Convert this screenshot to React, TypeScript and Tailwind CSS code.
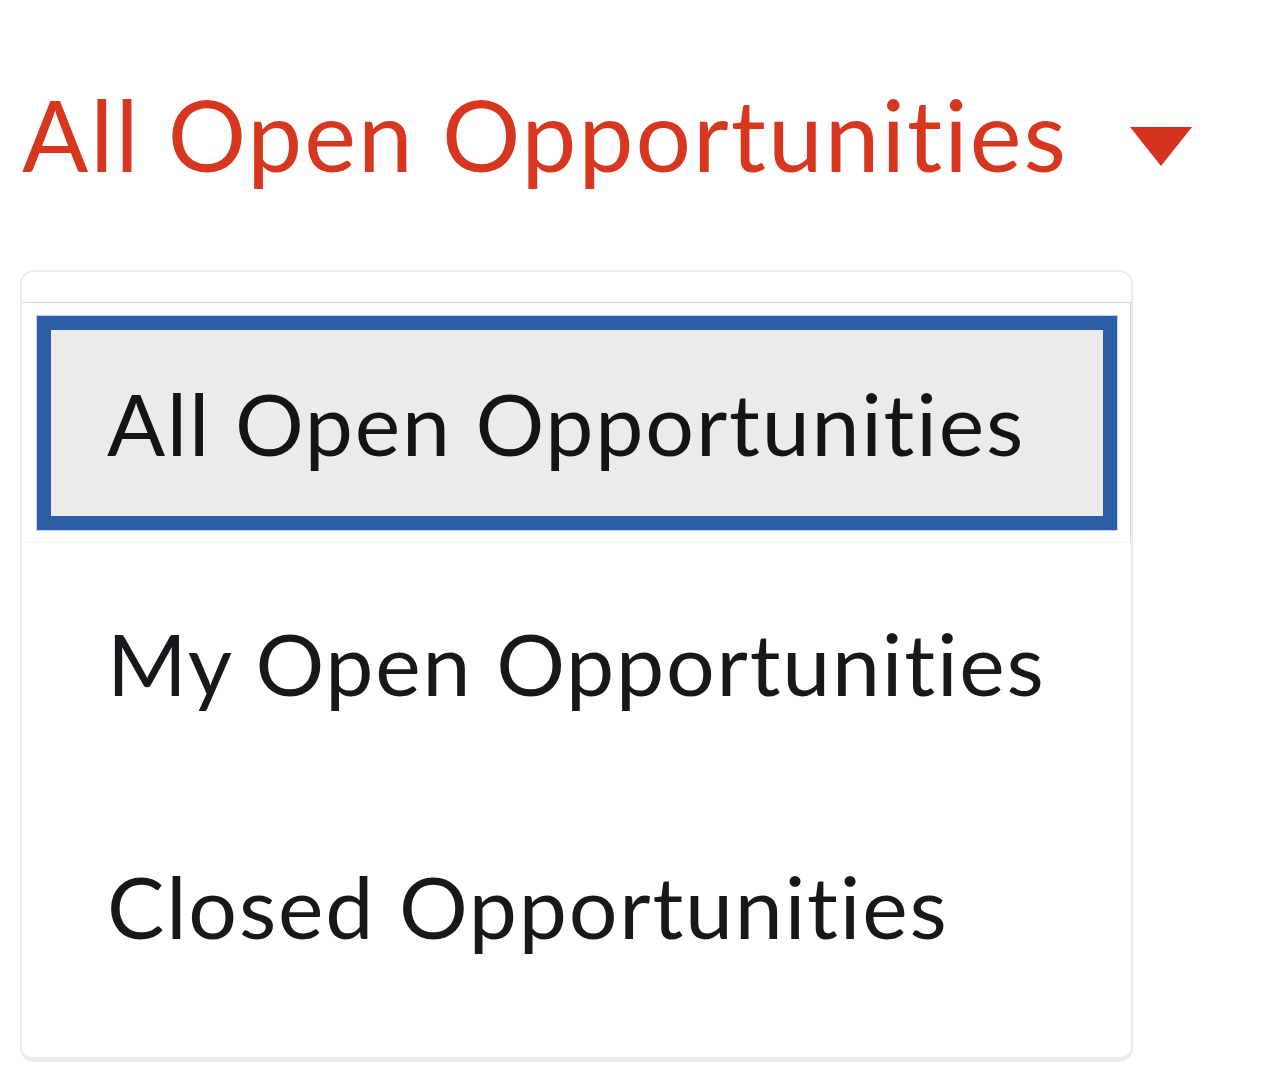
import React from 'react';

const OPTIONS = ['All Open Opportunities', 'My Open Opportunities', 'Closed Opportunities'];

const Caret: React.FC = () => (
  <svg width="62" height="39" viewBox="0 0 62 39" className="mt-[42px] shrink-0">
    <path d="M0 0 H62 L31 39 Z" fill="#d5321f" />
  </svg>
);

export default function App() {
  const [selected] = React.useState(0);

  return (
    <div
      className="min-h-screen bg-white [font-variant-ligatures:none]"
      style={{ fontFamily: 'Lato, "Open Sans", sans-serif' }}
    >
      <div className="flex items-start pt-[85px] pl-[22px]">
        <span className="text-[98px] leading-none tracking-[0.021em] text-[#d7371f] whitespace-nowrap">
          All Open Opportunities
        </span>
        <div className="ml-[62px]">
          <Caret />
        </div>
      </div>

      <div className="ml-[20px] mt-[87px] w-[1113px] h-[792px] rounded-[14px] border-2 border-b-[5px] border-[#ececec] bg-white overflow-hidden">
        <div className="h-[30px]" />
        <div className="border-t border-r border-[#cfdaee] border-b border-b-[#f2f5fa] pt-[13px] pb-[12px] pl-[15px] pr-[13px]">
          <div className="h-[214px] bg-[#ecebea] border-[14px] border-[#2b5ea7] ring-1 ring-[#c5d4ec] flex items-center pl-[56px]">
            <span className="text-[86px] leading-none tracking-[0.021em] text-[#141414] whitespace-nowrap">
              {OPTIONS[selected]}
            </span>
          </div>
        </div>
        {OPTIONS.filter((_, i) => i !== selected).map((label) => (
          <div key={label} className="h-[243px] flex items-center pl-[85px] pb-[4px]">
            <span className="text-[86px] leading-none tracking-[0.021em] text-[#17181b] whitespace-nowrap">{label}</span>
          </div>
        ))}
      </div>
    </div>
  );
}
